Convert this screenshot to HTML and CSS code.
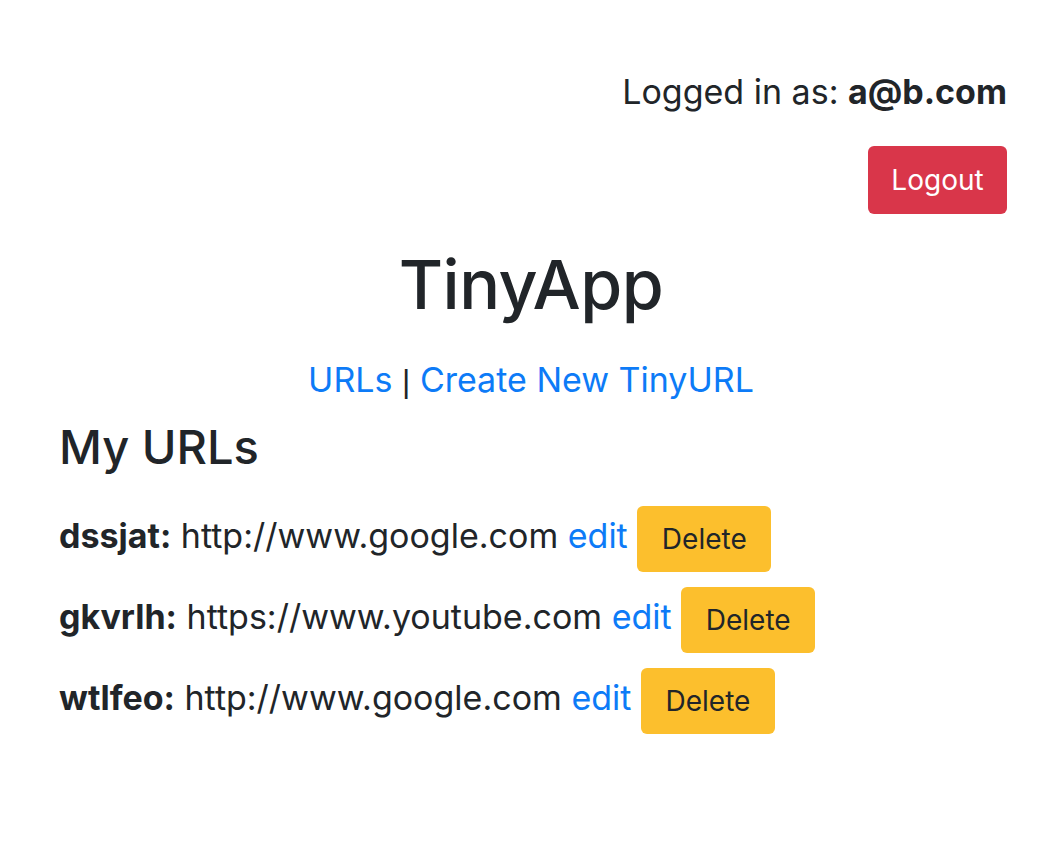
FILE: index.html
```html
<!DOCTYPE html>
<html>
<head>
<meta charset="utf-8">
<link rel="stylesheet" href="styles.css">
</head>
<body>
<header class="top">
  <div class="login">Logged in as: <b>a@b.com</b></div>
  <button class="btn btn-logout">Logout</button>
</header>
<h1 class="title">TinyApp</h1>
<nav class="nav"><a href="#">URLs</a> <span class="sep">|</span> <a href="#">Create New TinyURL</a></nav>
<main class="main">
  <h2 class="heading">My URLs</h2>
  <div class="row"><b>dssjat:</b> http://www.google.com <a href="#">edit</a> <button class="btn btn-delete">Delete</button></div>
  <div class="row"><b>gkvrlh:</b> https://www.youtube.com <a href="#">edit</a> <button class="btn btn-delete">Delete</button></div>
  <div class="row"><b>wtlfeo:</b> http://www.google.com <a href="#">edit</a> <button class="btn btn-delete">Delete</button></div>
</main>
</body>
</html>
```
FILE: styles.css
```css
html, body { margin: 0; padding: 0; background: #fff; }
body {
  font-family: Inter, "Noto Sans", sans-serif;
  color: #212529;
  font-size: 34px;
  line-height: 1.5;
}
a { color: #0d7bf7; text-decoration: none; }
b { font-weight: 700; }
.top {
  display: flex;
  flex-direction: column;
  align-items: flex-end;
  padding: 66px 55px 0 0;
}
.login { line-height: 51px; }
.btn {
  font-family: inherit;
  border: none;
  border-radius: 6px;
  font-size: 28px;
  line-height: 40px;
  cursor: pointer;
}
.btn-logout {
  margin-top: 29px;
  background: #d9364a;
  color: #fff;
  width: 139px;
  height: 68px;
  padding: 0;
}
.title {
  margin: 30px 0 0;
  text-align: center;
  font-size: 68px;
  font-weight: 500;
  line-height: 1.2;
  letter-spacing: -0.5px;
}
.nav { text-align: center; margin-top: 28px; }
.sep { font-family: "Liberation Sans", sans-serif; font-size: 32px; }
.main { padding: 0 59px; }
.heading {
  margin: 14px 0 31px;
  font-size: 47px;
  font-weight: 500;
  line-height: 1.2;
}
.row { margin-bottom: 15px; white-space: nowrap; }
.btn-delete {
  background: #fcbf2d;
  color: #212529;
  width: 134px;
  height: 66px;
  padding: 0;
  vertical-align: middle;
}
```
